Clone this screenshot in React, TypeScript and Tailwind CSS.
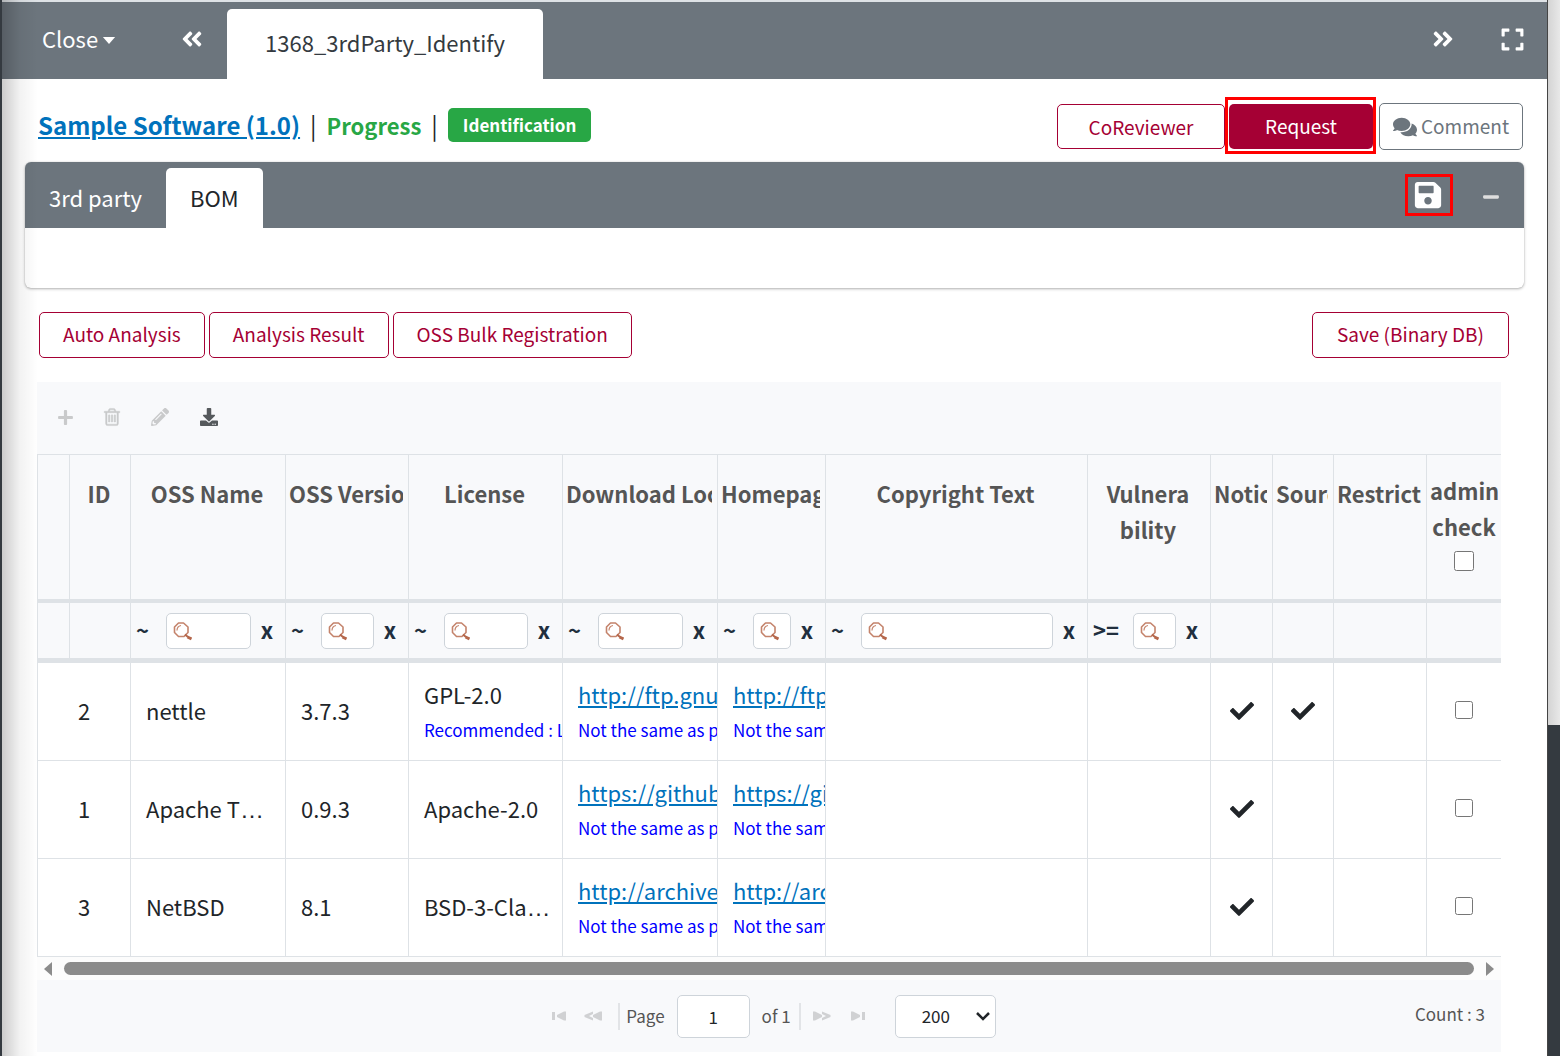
import React from "react";
import {
  FaAngleDoubleLeft,
  FaAngleDoubleRight,
  FaCheck,
  FaComments,
  FaDownload,
  FaExpand,
  FaMinus,
  FaPencilAlt,
  FaPlus,
  FaSave,
} from "react-icons/fa";

const outline =
  "rounded-[5px] border border-[#a50034] bg-white text-[19px] leading-[27px] whitespace-nowrap text-[#a50034]";

type Column = {
  title: string[];
  width: string;
  filter?: string;
  center?: boolean;
  check?: boolean;
};

const columns: Column[] = [
  { title: [""], width: "w-[32px]" },
  { title: ["ID"], width: "w-[61px]", center: true },
  { title: ["OSS Name"], width: "w-[155px]", filter: "~", center: true },
  { title: ["OSS Version"], width: "w-[123px]", filter: "~" },
  { title: ["License"], width: "w-[154px]", filter: "~", center: true },
  { title: ["Download Location"], width: "w-[155px]", filter: "~" },
  { title: ["Homepage"], width: "w-[108px]", filter: "~" },
  { title: ["Copyright Text"], width: "w-[262px]", filter: "~", center: true },
  { title: ["Vulnera", "bility"], width: "w-[123px]", filter: ">=", center: true },
  { title: ["Notice"], width: "w-[62px]" },
  { title: ["Source"], width: "w-[61px]" },
  { title: ["Restriction"], width: "w-[93px]" },
  { title: ["admin", "check"], width: "w-[74px]", check: true, center: true },
];

type Row = {
  id: string;
  name: string;
  version: string;
  license: string;
  licenseNote?: string;
  url: string;
  source: boolean;
};

const rows: Row[] = [
  {
    id: "2",
    name: "nettle",
    version: "3.7.3",
    license: "GPL-2.0",
    licenseNote: "Recommended : LGPL",
    url: "http://ftp.gnu.org",
    source: true,
  },
  {
    id: "1",
    name: "Apache Thrift",
    version: "0.9.3",
    license: "Apache-2.0",
    url: "https://github.com",
    source: false,
  },
  {
    id: "3",
    name: "NetBSD",
    version: "8.1",
    license: "BSD-3-Clause",
    url: "http://archive.netbsd.org",
    source: false,
  },
];

function TrashIcon() {
  return (
    <svg viewBox="0 0 1792 1792" className="size-5" fill="currentColor" stroke="currentColor" strokeWidth="40">
      <path d="M704 736v576q0 14-9 23t-23 9h-64q-14 0-23-9t-9-23v-576q0-14 9-23t23-9h64q14 0 23 9t9 23zm256 0v576q0 14-9 23t-23 9h-64q-14 0-23-9t-9-23v-576q0-14 9-23t23-9h64q14 0 23 9t9 23zm256 0v576q0 14-9 23t-23 9h-64q-14 0-23-9t-9-23v-576q0-14 9-23t23-9h64q14 0 23 9t9 23zm128 724v-948h-896v948q0 22 7 40.500t14.500 27 10.500 8.500h832q3 0 10.500-8.500t14.500-27 7-40.500zm-672-1076h448l-48-117q-7-9-17-11h-317q-10 2-17 11zm928 32v64q0 14-9 23t-23 9h-96v948q0 83-47 143.500t-113 60.500h-832q-66 0-113-58.500t-47-141.500v-952h-96q-14 0-23-9t-9-23v-64q0-14 9-23t23-9h309l70-167q15-37 54-63t79-26h320q40 0 79 26t54 63l70 167h309q14 0 23 9t9 23z" />
    </svg>
  );
}

function SearchGlyph() {
  return (
    <svg
      viewBox="0 0 20 20"
      className="pointer-events-none absolute top-[8px] left-[6px] size-5"
      fill="none"
      stroke="#c4836b"
    >
      <path d="M6.500 2h5l4.500 4v5.500l-4 4H6.500l-4-4V6z" strokeWidth="1.600" strokeLinejoin="round" />
      <path d="M5 9.500c0-3 1.500-4.500 4-5" strokeWidth="1.200" />
      <path d="M13 13.500l3 2.500" stroke="#b5674b" strokeWidth="2" />
      <path d="M15.500 16l4 2" stroke="#b5674b" strokeWidth="3" />
    </svg>
  );
}

function Filter({ op, label }: { op: string; label: string }) {
  return (
    <div className="flex h-[55px] items-center text-[22px] leading-8 text-[#212f3e]">
      <span className={`shrink-0 pb-1 pl-[5px] font-bold ${op === "~" ? "w-[35px]" : "w-[45px]"}`}>{op}</span>
      <div className="relative min-w-0 flex-1">
        <input
          aria-label={label}
          className="block h-9 w-full rounded-[5px] border border-[#ced4da] bg-white pl-7 text-[19px] outline-none"
        />
        <SearchGlyph />
      </div>
      <button type="button" aria-label={`Clear ${label}`} className="w-[34px] shrink-0 pr-0.5 pb-1 font-bold">
        x
      </button>
    </div>
  );
}

function LinkCell({ url }: { url: string }) {
  return (
    <td className="overflow-hidden border-r border-b border-[#dee2e6] pt-px pl-[15px] whitespace-nowrap">
      <a href={url} className="block w-max leading-9 text-[#0072bc] underline underline-offset-2">
        {url}
      </a>
      <span className="block w-max text-[17px] leading-9 text-[#0000ff]">Not the same as prior</span>
    </td>
  );
}

const textFont = { fontFamily: '"Noto Sans CJK KR", "Open Sans", sans-serif' };

function TextCell({ text }: { text: string }) {
  return (
    <td className="overflow-hidden border-r border-b border-[#dee2e6] pr-[9px] pb-0.5 pl-[15px] font-['Liberation_Sans'] text-[24px] leading-8 text-ellipsis whitespace-nowrap">
      <span className="text-[22px]" style={textFont}>{text}</span>
    </td>
  );
}

function PagerIcon({ kind }: { kind: "first" | "prev" | "next" | "last" }) {
  const flip = kind === "next" || kind === "last";
  const edge = kind === "first" || kind === "last";
  return (
    <svg viewBox="0 0 18 10" className={`h-2.5 w-[18px] ${flip ? "rotate-180" : ""}`} fill="#d0d1d3">
      {edge ? (
        <>
          <rect x="2" y="1" width="3" height="8" />
          <path d="M16 0.500v9h-2L7 6V4l7-3.500z" />
        </>
      ) : (
        <>
          <path d="M18 0.500v9h-2L9 6V4l7-3.500z" />
          <path d="M9 0.500L0.500 4v2L9 9.500V7L5 5l4-2z" />
        </>
      )}
    </svg>
  );
}

const empty = "border-r border-b border-[#dee2e6]";

export default function App() {
  return (
    <div className="flex min-h-screen bg-[#343a40] text-[22px] text-[#212529]" style={textFont}>
      <div className="w-[2px] shrink-0" />
      <div className="relative min-w-0 flex-1 bg-white">
        <header className="flex h-[79px] items-end border-t-2 border-[#dee2e6] bg-[#6c757d] text-white">
          <button type="button" className="mb-[23px] ml-10 flex items-center gap-1 leading-9">
            Close
            <svg viewBox="0 0 14 8" className="mt-1 h-[7px] w-[14px]" fill="currentColor">
              <path d="M0 0h14L7 8z" />
            </svg>
          </button>
          <button type="button" aria-label="Previous tabs" className="mb-7 ml-[64px]">
            <FaAngleDoubleLeft className="size-6" />
          </button>
          <button type="button" className="ml-[23px] h-[70px] rounded-t-[5px] bg-white px-[38px] pb-1 leading-9 text-[#343a40]">
            1368_3rdParty_Identify
          </button>
          <button type="button" aria-label="Next tabs" className="mb-7 ml-auto">
            <FaAngleDoubleRight className="size-6" />
          </button>
          <button type="button" aria-label="Full screen" className="mr-[22px] mb-[27px] ml-[45px]">
            <FaExpand className="size-[25px]" />
          </button>
        </header>

        <div className="flex h-[83px] items-center pt-3 pr-6 pl-9">
          <h1 className="flex items-center pb-1 text-[24px] leading-9 font-bold whitespace-nowrap">
            <a href="#sample" className="text-[#0072bc] underline underline-offset-2">
              Sample Software (1.0)
            </a>
            <span className="mx-2.5 font-normal">|</span>
            <span className="text-[22px] text-[#28a745]">Progress</span>
            <span className="mx-2.5 font-normal">|</span>
            <span className="rounded-[5px] bg-[#28a745] px-[15px] text-[17px] leading-[34px] text-white">Identification</span>
          </h1>
          <button type="button" className={`${outline} ml-auto h-[45px] w-[168px]`}>
            CoReviewer
          </button>
          <div className="mb-0.5 border-[3px] border-[#ff0000] pt-1 pb-0.5 pl-px">
            <button type="button" className="block h-[45px] w-[144px] rounded-[5px] bg-[#a50034] text-[19px] text-white">
              Request
            </button>
          </div>
          <button type="button" className="ml-[3px] flex h-[47px] w-[144px] items-center justify-center gap-1 rounded-[5px] border border-[#6c757d] text-[19px] text-[#6c757d]">
            <FaComments className="size-6" />
            Comment
          </button>
        </div>

        <section className="mx-[23px] overflow-hidden rounded-[6px] shadow-[0_0_1px_rgba(0,0,0,0.2),0_1px_3px_rgba(0,0,0,0.3)]">
          <div className="flex h-[66px] items-end bg-[#6c757d] text-white">
            <button type="button" className="h-[60px] px-6 pb-0.5">3rd party</button>
            <button type="button" className="h-[60px] rounded-t-[5px] bg-white px-6 pb-0.5 text-[#212529]">BOM</button>
            <button type="button" aria-label="Save" className="mb-3 ml-auto flex h-[42px] w-12 items-center justify-center border-[3px] border-[#ff0000] pr-[3px]">
              <FaSave className="size-[30px]" />
            </button>
            <button type="button" aria-label="Collapse" className="mr-6 mb-[22px] ml-[29px]">
              <FaMinus className="size-[18px] text-[#dedede]" />
            </button>
          </div>
          <div className="h-[60px]" />
        </section>

        <div className="mt-6 mr-[38px] ml-[37px] flex gap-1">
          <button type="button" className={`${outline} h-[46px] px-[23px] pb-1`}>Auto Analysis</button>
          <button type="button" className={`${outline} h-[46px] px-[23px] pb-1`}>Analysis Result</button>
          <button type="button" className={`${outline} h-[46px] px-[23px] pb-1`}>OSS Bulk Registration</button>
          <button type="button" className={`${outline} ml-auto h-[46px] px-6 pb-1`}>Save (Binary DB)</button>
        </div>

        <div className="mt-6 mr-[46px] ml-[35px] bg-[#f8f9fb]">
          <div className="flex h-[72px] items-center pb-0.5 pl-5 text-[#c9cacb]">
            <button type="button" aria-label="Add"><FaPlus className="size-[17px]" /></button>
            <button type="button" aria-label="Delete" className="ml-7"><TrashIcon /></button>
            <button type="button" aria-label="Edit" className="ml-[29px]"><FaPencilAlt className="size-[18px]" /></button>
            <button type="button" aria-label="Download" className="ml-[31px] text-[#55595c]"><FaDownload className="size-[18px]" /></button>
          </div>
          <table className="w-full table-fixed border-separate border-spacing-0 border-t border-l border-[#dee2e6]">
            <colgroup>
              {columns.map((c, i) => (
                <col key={i} className={c.width} />
              ))}
            </colgroup>
            <thead>
              <tr className="text-[#555555]">
                {columns.map((c, i) => (
                  <th
                    key={i}
                    className={`h-[148px] border-b-4 border-[#dee2e6] pl-[3px] align-top leading-9 font-bold whitespace-nowrap ${i < 12 ? "border-r" : ""} ${c.check ? "pt-[17px] pr-[3px]" : "pt-5 pr-[5px]"}`}
                  >
                    <div className={`overflow-hidden ${c.center ? "text-center" : "text-left"}`}>
                      {c.title.map((t) => (
                        <div key={t}>{t}</div>
                      ))}
                      {c.check && (
                        <input type="checkbox" aria-label="Check all" className="mx-auto mt-[7px] block size-5" />
                      )}
                    </div>
                  </th>
                ))}
              </tr>
              <tr>
                {columns.map((c, i) => (
                  <td key={i} className={`border-b-5 border-[#dee2e6] p-0 ${i < 12 ? "border-r" : ""}`}>
                    {c.filter && <Filter op={c.filter} label={c.title.join("")} />}
                  </td>
                ))}
              </tr>
            </thead>
            <tbody className="bg-white">
              {rows.map((r) => (
                <tr key={r.id} className="h-[98px]">
                  <td colSpan={2} className="border-r border-b border-[#dee2e6] pb-0.5 text-center">{r.id}</td>
                  <TextCell text={r.name} />
                  <TextCell text={r.version} />
                  {r.licenseNote ? (
                    <td className="overflow-hidden border-r border-b border-[#dee2e6] pt-px pl-[15px] whitespace-nowrap">
                      <span className="block leading-9">{r.license}</span>
                      <span className="block w-max text-[17px] leading-9 text-[#0000ff]">{r.licenseNote}</span>
                    </td>
                  ) : (
                    <TextCell text={r.license} />
                  )}
                  <LinkCell url={r.url} />
                  <LinkCell url={r.url} />
                  <td className={empty} />
                  <td className={empty} />
                  <td className={empty}><FaCheck className="mx-auto mb-0.5 size-6" /></td>
                  <td className={empty}>{r.source && <FaCheck className="mx-auto mb-0.5 size-6" />}</td>
                  <td className={empty} />
                  <td className="border-b border-[#dee2e6]">
                    <input type="checkbox" aria-label={`Admin check ${r.name}`} className="mx-auto mb-1 block size-[18px]" />
                  </td>
                </tr>
              ))}
            </tbody>
          </table>
          <div className="flex h-[23px] items-center gap-3 bg-[#fcfcfc] px-[7px]">
            <svg viewBox="0 0 8 14" className="h-[14px] w-2" fill="#8b8b8b"><path d="M8 0v14L0 7z" /></svg>
            <div className="h-[13px] flex-1 rounded-full bg-[#8b8b8b]" />
            <svg viewBox="0 0 8 14" className="h-[14px] w-2" fill="#8b8b8b"><path d="M0 0v14L8 7z" /></svg>
          </div>
          <div className="grid h-[72px] grid-cols-[1fr_auto_1fr] items-center text-[17px] text-[#555555]">
            <span />
            <div className="flex items-center pl-2">
              <button type="button" aria-label="First page"><PagerIcon kind="first" /></button>
              <button type="button" aria-label="Previous page" className="ml-4"><PagerIcon kind="prev" /></button>
              <span className="ml-4 h-[27px] w-[2px] bg-[#e2e4e7]" />
              <label htmlFor="page" className="ml-1.5">Page</label>
              <input id="page" defaultValue="1" className="mx-3 h-[43px] w-[73px] rounded-[5px] border border-[#ced4da] bg-white text-center text-[17px] text-[#212529]" />
              <span>of 1</span>
              <span className="ml-2 h-[27px] w-[2px] bg-[#e2e4e7]" />
              <button type="button" aria-label="Next page" className="ml-3"><PagerIcon kind="next" /></button>
              <button type="button" aria-label="Last page" className="ml-[18px]"><PagerIcon kind="last" /></button>
              <div className="relative ml-7">
                <select aria-label="Rows per page" className="block h-[43px] w-[101px] appearance-none rounded-[5px] border border-[#ced4da] bg-white pl-[26px] text-[17px] text-[#212529]">
                  <option>200</option>
                </select>
                <svg viewBox="0 0 14 9" className="pointer-events-none absolute top-[17px] right-[6px] h-[9px] w-[14px]" fill="none" stroke="#212529" strokeWidth="2.500"><path d="M1 1l6 6l6-6" /></svg>
              </div>
            </div>
            <span className="pr-4 pb-1 text-right">Count : 3</span>
          </div>
        </div>
        <div className="pointer-events-none absolute inset-y-0 left-0 w-9 bg-linear-to-r from-black/20 via-black/5 to-transparent" />
      </div>
      <div className="w-[13px] shrink-0 border-l border-[#454545]">
        <div className="h-[725px] bg-linear-to-r from-[#d4d4d4] to-[#e8e8e8]" />
      </div>
    </div>
  );
}
